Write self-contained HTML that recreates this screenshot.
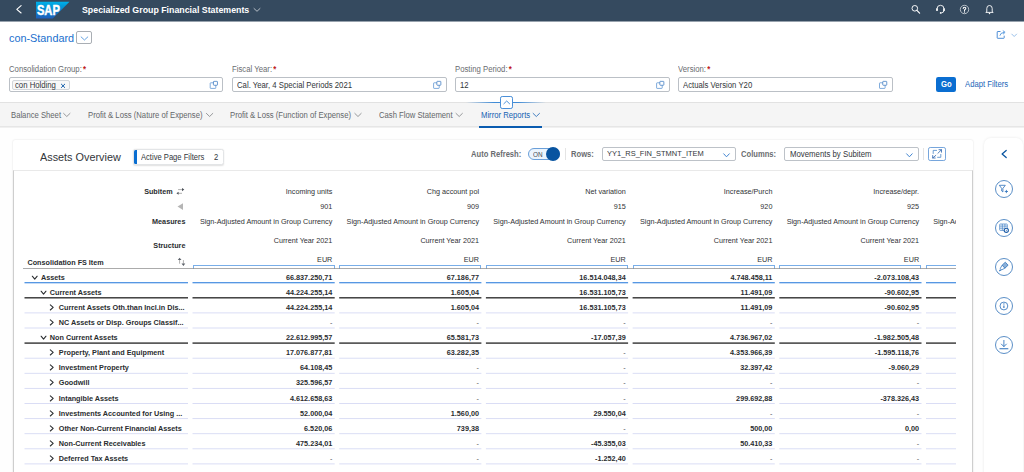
<!DOCTYPE html>
<html>
<head>
<meta charset="utf-8">
<title>Specialized Group Financial Statements</title>
<style>
*{box-sizing:border-box;margin:0;padding:0}
html,body{width:1024px;height:472px;overflow:hidden}
body{font-family:"Liberation Sans",sans-serif;background:#fefefe;color:#32363a;position:relative;font-size:7.7px}
.abs{position:absolute}
.t{position:absolute;white-space:nowrap;line-height:1}
svg{position:absolute;overflow:visible}
#shell{left:0;top:0;width:1024px;height:22px;background:#354a5f;border-bottom:1px solid #97a2ad}
#shelltitle{left:82px;top:5.8px;font-size:8.8px;font-weight:bold;color:#fff}
#hdr{left:0;top:22px;width:1024px;height:80px;background:#fff}
#variant{left:9.2px;top:32.6px;font-size:10.85px;color:#1a72d0;-webkit-text-stroke:0.2px}

.lbl b{color:#c01818;font-weight:bold;font-size:1em;line-height:0;position:relative;top:0.7px;left:1.3px}
.inp{position:absolute;top:77.3px;height:14.6px;width:214.5px;border:1px solid #bbc0c6;border-radius:2px;background:#fff}
.inp .v{position:absolute;left:4.2px;top:2.6px;font-size:7.75px;white-space:nowrap;line-height:1;color:#32363a;-webkit-text-stroke:0.18px}
#tabs{left:0;top:101.9px;width:1024px;height:24.8px;background:#f5f5f5;border-top:1px solid #e2e2e2;border-bottom:1px solid #e6e6e6;box-shadow:0 1px 0 #f0f0f0}
.tab{font-size:7.7px;color:#64676a;top:111.7px;-webkit-text-stroke:0.1px}
#card{left:13px;top:140px;width:960px;height:340px;background:#fff;border-radius:2px;box-shadow:0 0 2px rgba(0,0,0,.14)}
#tbl{left:13px;top:170px;width:960px;height:310px;border:1px solid #cecece;border-top-color:#e9e9e9;border-bottom:none;background:#fff}
#panel{left:984px;top:138px;width:38.6px;height:340px;background:#fff;border-radius:7px 7px 0 0;box-shadow:0 0 3px rgba(0,0,0,.09)}
.tb{font-size:7.6px;font-weight:bold;color:#64676a;top:150.7px}
.sel{position:absolute;top:146.9px;height:13.9px;border:1px solid #bdc2c8;border-radius:2px;background:#fff}
.sel .v{position:absolute;left:5px;top:2.9px;font-size:7.48px;white-space:nowrap;line-height:1;color:#32363a}
.h{font-size:7.22px;color:#2f3235;text-align:right}
.hb{font-size:7.22px;color:#2a2d30;font-weight:bold;text-align:right}
.c{position:absolute;white-space:nowrap;line-height:1;font-size:7.25px;font-weight:bold;color:#2a2d30;text-align:right}
.ln{position:absolute;height:1px}
#clip{left:0;top:171px;width:956px;height:301px;overflow:hidden}
.circ{position:absolute;left:994.7px;width:18.4px;height:18.4px;border:1px solid #5b8fc7;border-radius:50%;background:#fff}
</style>
</head>
<body>
<div id="shell" class="abs"></div>
<svg style="left:15px;top:4px" width="9" height="11"><g transform="translate(0.6,0.8)"><path d="M5.5 0.8 L1.2 4.5 L5.5 8.2" fill="none" stroke="#fff" stroke-width="1.1" stroke-linecap="round" stroke-linejoin="round"/></g></svg>
<svg style="left:36px;top:1px" width="35" height="19"><g transform="translate(0,0.8) scale(0.5,0.5)"><defs><linearGradient id="sg" x1="0" y1="0" x2="0" y2="1"><stop offset="0" stop-color="#00b1eb"/><stop offset="0.25" stop-color="#009ad9"/><stop offset="1" stop-color="#1e5fbb"/></linearGradient></defs><path d="M0 0 H67 L33.5 33.2 H0 Z" fill="url(#sg)"/><text x="1.8" y="27" font-family="Liberation Sans, sans-serif" font-weight="bold" font-size="28.5" fill="#fff" stroke="#fff" stroke-width="0.9" textLength="46" lengthAdjust="spacingAndGlyphs">SAP</text></g></svg>
<div class="t " style="left:82px;top:4.72px;font-size:9.56px;color:#fff;font-weight:bold;transform-origin:0 0;transform:scaleX(0.9217);">Specialized Group Financial Statements</div>
<svg style="left:253px;top:8px" width="9" height="5"><g transform="translate(0.5,0)"><path d="M0.5 0.5 L3.5 3.3 L6.5 0.5" fill="none" stroke="#d5dadf" stroke-width="0.8" stroke-linecap="round" stroke-linejoin="round"/></g></svg>
<svg style="left:911px;top:4px" width="11" height="12"><g transform="translate(0,0.5)"><circle cx="3.8" cy="3.8" r="2.8" fill="none" stroke="#fff" stroke-width="0.95"/><path d="M5.9 5.9 L8.6 8.6" stroke="#fff" stroke-width="1.2" stroke-linecap="round"/></g></svg>
<svg style="left:935px;top:4px" width="12" height="12"><g transform="translate(0,0)"><path d="M2 6 V4.8 A3.5 3.5 0 0 1 9 4.8 V6.2 A2.6 2.6 0 0 1 6.4 8.8" fill="none" stroke="#fff" stroke-width="0.9"/><rect x="1.2" y="4.3" width="1.6" height="2.8" rx="0.5" fill="#fff"/><rect x="8.2" y="4.3" width="1.6" height="2.8" rx="0.5" fill="#fff"/><circle cx="5.7" cy="8.9" r="0.9" fill="#fff"/></g></svg>
<svg style="left:959px;top:4px" width="12" height="12"><g transform="translate(0.5,0.5)"><circle cx="5" cy="5" r="4.2" fill="none" stroke="#e8ecef" stroke-width="0.7"/><path d="M3.7 4 Q3.7 2.7 5 2.7 Q6.3 2.7 6.3 3.8 Q6.3 4.6 5.5 5 Q5 5.3 5 6.1" fill="none" stroke="#fff" stroke-width="1.05" stroke-linecap="round"/><circle cx="5" cy="7.5" r="0.65" fill="#fff"/></g></svg>
<svg style="left:984px;top:4px" width="12" height="12"><g transform="translate(0.5,0)"><path d="M2.3 7.8 V4.4 A2.7 2.9 0 0 1 7.7 4.4 V7.8 L8.7 8.4 H1.3 Z" fill="none" stroke="#fff" stroke-width="0.9" stroke-linejoin="round"/><circle cx="5" cy="9.6" r="0.75" fill="#fff"/></g></svg>
<div id="hdr" class="abs"></div>
<div class="t " style="left:9.2px;top:31.61px;font-size:11.77px;color:#1a70ce;transform-origin:0 0;transform:scaleX(0.9217);">con-Standard</div>
<div class="abs" style="left:76.4px;top:31.4px;width:15.4px;height:12.2px;border:1px solid #a9aeb4;border-radius:2px;background:#fff"></div>
<svg style="left:80px;top:36px" width="10" height="6"><g transform="translate(0.5,0.3)"><path d="M0.6 0.6 L3.95 3.7 L7.3 0.6" fill="none" stroke="#3f8ad8" stroke-width="0.8" stroke-linecap="round" stroke-linejoin="round"/></g></svg>
<svg style="left:996px;top:30px" width="12" height="11"><g transform="translate(0.5,0.1)"><path d="M4 1.4 H1.2 Q0.7 1.4 0.7 1.9 V7.7 Q0.7 8.2 1.2 8.2 H7.2 Q7.7 8.2 7.7 7.7 V5.6" fill="none" stroke="#2f7bd0" stroke-width="0.85"/><path d="M3.4 5.6 Q3.8 2.6 7.6 2.3" fill="none" stroke="#3f8ad8" stroke-width="0.85"/><path d="M6.3 0.5 L8.6 2.2 L6.6 4.1" fill="none" stroke="#3f8ad8" stroke-width="0.85" stroke-linejoin="round"/></g></svg>
<svg style="left:1011px;top:33px" width="8" height="6"><g transform="translate(0.3,0.6)"><path d="M0.5 0.5 L2.9 2.9 L5.3 0.5" fill="none" stroke="#7fb0e3" stroke-width="0.8" stroke-linecap="round" stroke-linejoin="round"/></g></svg>
<div class="t lbl" style="left:8.9px;top:64.8px;font-size:8.41px;color:#6a6d70;transform-origin:0 0;transform:scaleX(0.9217);">Consolidation Group:<b>*</b></div>
<div class="inp" style="left:8.9px"><div class="abs" style="left:2.4px;top:1.8px;width:57.4px;height:10.2px;border:1px solid #d3d6da;border-radius:2px;background:#f8f8f8"></div></div>
<div class="t " style="left:14.8px;top:80.8px;font-size:8.41px;color:#32363a;transform-origin:0 0;transform:scaleX(0.9217);">con Holding</div>
<svg style="left:60px;top:83px" width="7" height="7"><g transform="translate(0.6,0.4)"><path d="M0.8 0.8 L4.1 4.1 M4.1 0.8 L0.8 4.1" stroke="#0f5aa8" stroke-width="1.0" stroke-linecap="round"/></g></svg>
<svg style="left:208px;top:80px" width="12" height="10"><g transform="translate(0.6,0.6)"><rect x="1.6" y="2.2" width="5.6" height="5.6" rx="0.5" fill="none" stroke="#5590d0" stroke-width="0.75"/><rect x="4.85" y="0.75" width="4" height="3.9" rx="0.5" fill="#fff" stroke="#3a78c0" stroke-width="0.75"/></g></svg>
<div class="t lbl" style="left:232.3px;top:64.8px;font-size:8.41px;color:#6a6d70;transform-origin:0 0;transform:scaleX(0.9217);">Fiscal Year:<b>*</b></div>
<div class="inp" style="left:232.3px"></div>
<div class="t " style="left:237.3px;top:80.8px;font-size:8.41px;color:#32363a;transform-origin:0 0;transform:scaleX(0.9217);">Cal. Year, 4 Special Periods 2021</div>
<svg style="left:432px;top:80px" width="11" height="10"><g transform="translate(0,0.6)"><rect x="1.6" y="2.2" width="5.6" height="5.6" rx="0.5" fill="none" stroke="#5590d0" stroke-width="0.75"/><rect x="4.85" y="0.75" width="4" height="3.9" rx="0.5" fill="#fff" stroke="#3a78c0" stroke-width="0.75"/></g></svg>
<div class="t lbl" style="left:455.3px;top:64.8px;font-size:8.41px;color:#6a6d70;transform-origin:0 0;transform:scaleX(0.9217);">Posting Period:<b>*</b></div>
<div class="inp" style="left:455.3px"></div>
<div class="t " style="left:460.3px;top:80.8px;font-size:8.41px;color:#32363a;transform-origin:0 0;transform:scaleX(0.9217);">12</div>
<svg style="left:655px;top:80px" width="11" height="10"><g transform="translate(0,0.6)"><rect x="1.6" y="2.2" width="5.6" height="5.6" rx="0.5" fill="none" stroke="#5590d0" stroke-width="0.75"/><rect x="4.85" y="0.75" width="4" height="3.9" rx="0.5" fill="#fff" stroke="#3a78c0" stroke-width="0.75"/></g></svg>
<div class="t lbl" style="left:678.2px;top:64.8px;font-size:8.41px;color:#6a6d70;transform-origin:0 0;transform:scaleX(0.9217);">Version:<b>*</b></div>
<div class="inp" style="left:678.2px"></div>
<div class="t " style="left:683.2px;top:80.8px;font-size:8.41px;color:#32363a;transform-origin:0 0;transform:scaleX(0.9217);">Actuals Version Y20</div>
<svg style="left:877px;top:80px" width="12" height="10"><g transform="translate(0.9,0.6)"><rect x="1.6" y="2.2" width="5.6" height="5.6" rx="0.5" fill="none" stroke="#5590d0" stroke-width="0.75"/><rect x="4.85" y="0.75" width="4" height="3.9" rx="0.5" fill="#fff" stroke="#3a78c0" stroke-width="0.75"/></g></svg>
<div class="abs" style="left:936.3px;top:77.4px;width:19.8px;height:14.6px;background:#0a6ed1;border-radius:2.2px"></div>
<div class="t " style="left:940.9px;top:79.82px;font-size:8.35px;color:#fff;font-weight:bold;transform-origin:0 0;transform:scaleX(0.9217);">Go</div>
<div class="t " style="left:965.2px;top:79.82px;font-size:8.35px;color:#1c66b8;transform-origin:0 0;transform:scaleX(0.9217);">Adapt Filters</div>
<div id="tabs" class="abs"></div>
<div class="abs" style="left:466px;top:101.6px;width:80px;height:1px;background:linear-gradient(90deg,rgba(10,110,209,0),rgba(10,110,209,.75) 35%,rgba(10,110,209,.75) 65%,rgba(10,110,209,0))"></div>
<div class="abs" style="left:500.3px;top:96px;width:12.9px;height:12.8px;border:1px solid #4a8fd8;border-radius:2.2px;background:#fff"></div>
<svg style="left:503px;top:100px" width="9" height="6"><g transform="translate(0.2,0.4)"><path d="M0.6 3.4 L3.5 0.6 L6.4 3.4" fill="none" stroke="#2f7fd3" stroke-width="0.85" stroke-linecap="round" stroke-linejoin="round"/></g></svg>
<div class="t " style="left:10.7px;top:110.82px;font-size:8.35px;color:#64676a;transform-origin:0 0;transform:scaleX(0.9217);">Balance Sheet</div>
<svg style="left:63px;top:112px" width="9" height="7"><g transform="translate(0.1,0.9)"><path d="M0.5 0.5 L3.7 3.6 L6.9 0.5" fill="none" stroke="#7d8083" stroke-width="0.8" stroke-linecap="round" stroke-linejoin="round"/></g></svg>
<div class="t " style="left:88.3px;top:110.82px;font-size:8.35px;color:#64676a;transform-origin:0 0;transform:scaleX(0.9217);">Profit &amp; Loss (Nature of Expense)</div>
<svg style="left:205px;top:112px" width="10" height="7"><g transform="translate(0.9,0.9)"><path d="M0.5 0.5 L3.7 3.6 L6.9 0.5" fill="none" stroke="#7d8083" stroke-width="0.8" stroke-linecap="round" stroke-linejoin="round"/></g></svg>
<div class="t " style="left:230px;top:110.82px;font-size:8.35px;color:#64676a;transform-origin:0 0;transform:scaleX(0.9217);">Profit &amp; Loss (Function of Expense)</div>
<svg style="left:354px;top:112px" width="9" height="7"><g transform="translate(0.3,0.9)"><path d="M0.5 0.5 L3.7 3.6 L6.9 0.5" fill="none" stroke="#7d8083" stroke-width="0.8" stroke-linecap="round" stroke-linejoin="round"/></g></svg>
<div class="t " style="left:379px;top:110.82px;font-size:8.35px;color:#64676a;transform-origin:0 0;transform:scaleX(0.9217);">Cash Flow Statement</div>
<svg style="left:455px;top:112px" width="9" height="7"><g transform="translate(0.5,0.9)"><path d="M0.5 0.5 L3.7 3.6 L6.9 0.5" fill="none" stroke="#7d8083" stroke-width="0.8" stroke-linecap="round" stroke-linejoin="round"/></g></svg>
<div class="t " style="left:480.6px;top:110.82px;font-size:8.35px;color:#1562b3;transform-origin:0 0;transform:scaleX(0.9217);">Mirror Reports</div>
<svg style="left:532px;top:112px" width="10" height="7"><g transform="translate(0.6,0.9)"><path d="M0.5 0.5 L3.7 3.6 L6.9 0.5" fill="none" stroke="#1562b3" stroke-width="0.8" stroke-linecap="round" stroke-linejoin="round"/></g></svg>
<div class="abs" style="left:478.6px;top:125.5px;width:63px;height:2px;background:#0a5cb0"></div>
<div id="card" class="abs"></div>
<div id="tbl" class="abs"></div>
<div class="t " style="left:40.1px;top:150.61px;font-size:11.77px;color:#32363a;transform-origin:0 0;transform:scaleX(0.9217);">Assets Overview</div>
<div class="abs" style="left:133.2px;top:148.8px;width:91px;height:15.8px;border:1px solid #e3e5e7;border-radius:2.5px;background:#fff;box-shadow:0 0.5px 1.5px rgba(0,0,0,.12);overflow:hidden"><div class="abs" style="left:-1px;top:-1px;width:3.6px;height:17px;background:#0a6ed1"></div></div>
<div class="t " style="left:140.9px;top:154.38px;font-size:8.25px;color:#32363a;transform-origin:0 0;transform:scaleX(0.9217);">Active Page Filters</div>
<div class="t " style="left:214.2px;top:154.38px;font-size:8.25px;color:#32363a;transform-origin:0 0;transform:scaleX(0.9217);">2</div>
<div class="t " style="left:471.4px;top:151.38px;font-size:8.25px;color:#6a6d70;font-weight:bold;transform-origin:0 0;transform:scaleX(0.9217);">Auto Refresh:</div>
<div class="abs" style="left:528px;top:148.3px;width:31.5px;height:12.2px;border:1px solid #6a9fd9;border-radius:6.2px;background:#ebf4fd"></div>
<div class="t " style="left:532.9px;top:152.03px;font-size:6.94px;color:#4a4f55;transform-origin:0 0;transform:scaleX(0.9217);">ON</div>
<div class="abs" style="left:545.7px;top:146.9px;width:14.3px;height:14.3px;border-radius:50%;background:#0854a0"></div>
<div class="abs" style="left:565px;top:148px;width:1px;height:12px;background:#e4e4e4"></div>
<div class="t " style="left:570.6px;top:151.38px;font-size:8.25px;color:#6a6d70;font-weight:bold;transform-origin:0 0;transform:scaleX(0.9217);">Rows:</div>
<div class="sel" style="left:601.6px;width:134.1px"></div>
<div class="t " style="left:607.4px;top:150.44px;font-size:8.12px;color:#32363a;transform-origin:0 0;transform:scaleX(0.9217);">YY1_RS_FIN_STMNT_ITEM</div>
<svg style="left:723px;top:153px" width="9" height="6"><g transform="translate(0.2,0.3)"><path d="M0.5 0.5 L3.3 3.5 L6.1 0.5" fill="none" stroke="#3a7fcf" stroke-width="0.95" stroke-linecap="round" stroke-linejoin="round"/></g></svg>
<div class="t " style="left:740.6px;top:151.38px;font-size:8.25px;color:#6a6d70;font-weight:bold;transform-origin:0 0;transform:scaleX(0.9217);">Columns:</div>
<div class="sel" style="left:784.2px;width:134.6px"></div>
<div class="t " style="left:789.7px;top:149.76px;font-size:8.48px;color:#32363a;transform-origin:0 0;transform:scaleX(0.9217);">Movements by Subitem</div>
<svg style="left:906px;top:153px" width="9" height="6"><g transform="translate(0.1,0.3)"><path d="M0.5 0.5 L3.3 3.5 L6.1 0.5" fill="none" stroke="#3a7fcf" stroke-width="0.95" stroke-linecap="round" stroke-linejoin="round"/></g></svg>
<div class="abs" style="left:923px;top:148px;width:1px;height:12px;background:#e4e4e4"></div>
<div class="abs" style="left:928.2px;top:146.5px;width:17.8px;height:14.6px;border:1px solid #77a6dc;border-radius:2.2px;background:#fff"></div>
<svg style="left:932px;top:149px" width="12" height="11"><g transform="translate(0.3,0)"><g fill="none" stroke-width="0.8" stroke-linecap="round" stroke-linejoin="round"><path d="M0.9 4.5 V1.4 H4.3" stroke="#4a86c8"/><path d="M8.5 5.4 V8.3 H5.3" stroke="#4a86c8"/><path d="M5.6 4.3 L9.1 0.8 M6.7 0.7 H9.2 V3.2" stroke="#2b62ad"/><path d="M3.5 6.4 L0.5 8.9 M0.4 6.5 V9 H2.9" stroke="#2b62ad"/></g></g></svg>
<div id="panel" class="abs"></div>
<svg style="left:1000px;top:149px" width="9" height="11"><g transform="translate(0.8,0.8)"><path d="M5.4 0.7 L1.3 4.2 L5.4 7.7" fill="none" stroke="#0854a0" stroke-width="1.25" stroke-linecap="round" stroke-linejoin="round"/></g></svg>
<div class="circ" style="top:179.6px"></div>
<svg style="left:994px;top:179px" width="21" height="20"><g transform="translate(0.7,0.6)"><path d="M4.6 5.7 H10.6 L8.2 8.8 V12.3 L7 11.4 V8.8 Z" fill="none" stroke="#2a6fba" stroke-width="0.8" stroke-linejoin="round"/><path d="M11.7 10.3 V13.5 M10.1 11.9 H13.3" stroke="#2a6fba" stroke-width="0.8"/></g></svg>
<div class="circ" style="top:218.8px"></div>
<svg style="left:994px;top:218px" width="21" height="21"><g transform="translate(0.7,0.8)"><g fill="none" stroke="#4a86c8" stroke-width="0.75"><rect x="5" y="5.2" width="7.6" height="6.4" rx="0.6"/><path d="M5 7.3 H12.6 M5 9.4 H10 M7.6 5.2 V11.6 M10.2 5.2 V9"/></g><circle cx="11.6" cy="11.5" r="2.1" fill="#fff" stroke="#1f5ea8" stroke-width="1.1"/><circle cx="11.6" cy="11.5" r="0.5" fill="#1f5ea8"/></g></svg>
<div class="circ" style="top:257.8px"></div>
<svg style="left:994px;top:257px" width="21" height="21"><g transform="translate(0.7,0.8)"><g stroke="#2a6fba" stroke-width="0.75" stroke-linejoin="round"><path d="M10.6 4.4 L13.4 7.4 L10.2 10.4 L7.4 7.4 Z" fill="#2a6fba" fill-opacity="0.55"/><path d="M7.4 7.4 L5.6 10.6 L7 12 L10.2 10.4" fill="none"/><path d="M5.8 11.4 L4.6 13.2 L6.6 12.4" fill="none"/></g></g></svg>
<div class="circ" style="top:296.8px"></div>
<svg style="left:994px;top:296px" width="21" height="21"><g transform="translate(0.7,0.8)"><circle cx="9.2" cy="9.2" r="3.9" fill="none" stroke="#2a6fba" stroke-width="0.8"/><path d="M9.2 8.6 V11.3" stroke="#2a6fba" stroke-width="1.1"/><circle cx="9.2" cy="7.1" r="0.65" fill="#2a6fba"/></g></svg>
<div class="circ" style="top:335.8px"></div>
<svg style="left:994px;top:335px" width="21" height="21"><g transform="translate(0.7,0.8)"><g fill="none" stroke="#2a6fba" stroke-width="0.85" stroke-linecap="round" stroke-linejoin="round"><path d="M9.2 4.6 V10.6 M6.7 8.3 L9.2 10.8 L11.7 8.3"/><path d="M5.2 13 H13.2" stroke-width="1.1"/></g></g></svg>
<div id="clip" class="abs">
<div class="t h" style="right:623.7px;top:17px;">Incoming units</div>
<div class="t h" style="right:623.7px;top:32px;">901</div>
<div class="t h" style="right:623.7px;top:47px;">Sign-Adjusted Amount in Group Currency</div>
<div class="t h" style="right:623.7px;top:66px;">Current Year 2021</div>
<div class="t h" style="right:623.7px;top:84.7px;">EUR</div>
<div class="abs" style="left:192.5px;top:94px;width:142.2px;height:4px;border:1px solid #79aee8;border-bottom:none"></div>
<div class="t h" style="right:477px;top:17px;">Chg account pol</div>
<div class="t h" style="right:477px;top:32px;">909</div>
<div class="t h" style="right:477px;top:47px;">Sign-Adjusted Amount in Group Currency</div>
<div class="t h" style="right:477px;top:66px;">Current Year 2021</div>
<div class="t h" style="right:477px;top:84.7px;">EUR</div>
<div class="abs" style="left:339.2px;top:94px;width:142.2px;height:4px;border:1px solid #79aee8;border-bottom:none"></div>
<div class="t h" style="right:330.3px;top:17px;">Net variation</div>
<div class="t h" style="right:330.3px;top:32px;">915</div>
<div class="t h" style="right:330.3px;top:47px;">Sign-Adjusted Amount in Group Currency</div>
<div class="t h" style="right:330.3px;top:66px;">Current Year 2021</div>
<div class="t h" style="right:330.3px;top:84.7px;">EUR</div>
<div class="abs" style="left:485.9px;top:94px;width:142.2px;height:4px;border:1px solid #79aee8;border-bottom:none"></div>
<div class="t h" style="right:183.6px;top:17px;">Increase/Purch</div>
<div class="t h" style="right:183.6px;top:32px;">920</div>
<div class="t h" style="right:183.6px;top:47px;">Sign-Adjusted Amount in Group Currency</div>
<div class="t h" style="right:183.6px;top:66px;">Current Year 2021</div>
<div class="t h" style="right:183.6px;top:84.7px;">EUR</div>
<div class="abs" style="left:632.6px;top:94px;width:142.2px;height:4px;border:1px solid #79aee8;border-bottom:none"></div>
<div class="t h" style="right:36.9px;top:17px;">Increase/depr.</div>
<div class="t h" style="right:36.9px;top:32px;">925</div>
<div class="t h" style="right:36.9px;top:47px;">Sign-Adjusted Amount in Group Currency</div>
<div class="t h" style="right:36.9px;top:66px;">Current Year 2021</div>
<div class="t h" style="right:36.9px;top:84.7px;">EUR</div>
<div class="abs" style="left:779.3px;top:94px;width:142.2px;height:4px;border:1px solid #79aee8;border-bottom:none"></div>
<div class="t h" style="left:933.2px;top:47px;">Sign-Adjusted Amount in Group Currency</div>
<div class="abs" style="left:926px;top:94px;width:142.2px;height:4px;border:1px solid #79aee8;border-bottom:none"></div>
<div class="t hb" style="right:783.4px;top:17px;">Subitem</div>
<svg style="left:176px;top:16px" width="10" height="10"><g transform="translate(0,0.5)"><path d="M2.1 2.1 H6.4 M2.3 5.8 H6" fill="none" stroke="#9b9b9b" stroke-width="0.8"/><path d="M6 0.6 L8.3 2.1 L6 3.7 Z M2.6 4.3 L0.4 5.8 L2.6 7.3 Z" fill="#4d525a"/></g></svg>
<svg style="left:177px;top:32px" width="8" height="9"><g transform="translate(0.2,0.1)"><path d="M5.8 0.2 V6.8 L0.3 3.5 Z" fill="#b5b5b5"/></g></svg>
<div class="t hb" style="right:770.6px;top:47px;">Measures</div>
<div class="t hb" style="right:770.6px;top:71px;">Structure</div>
<div class="t hb" style="left:27.5px;top:87.6px;">Consolidation FS Item</div>
<svg style="left:177px;top:86px" width="10" height="11"><g transform="translate(0.4,0.3)"><path d="M2.2 2.4 V6.4 M6 2.8 V6.4" fill="none" stroke="#9b9b9b" stroke-width="0.8"/><path d="M0.4 2.7 L2.2 0.4 L4.1 2.7 Z M4.1 6.2 L6 8.6 L7.9 6.2 Z" fill="#5d626a"/></g></svg>
<svg style="left:31px;top:104px" width="8" height="6"><g transform="translate(0.8,0.6)"><path d="M0.5 0.6 L2.95 3.6 L5.4 0.6" fill="none" stroke="#2a2d30" stroke-width="1.05" stroke-linecap="round" stroke-linejoin="round"/></g></svg>
<div class="t c" style="left:41px;top:103px;">Assets</div>
<div class="t c" style="right:623.7px;top:103px;">66.837.250,71</div>
<div class="t c" style="right:477px;top:103px;">67.186,77</div>
<div class="t c" style="right:330.3px;top:103px;">16.514.048,34</div>
<div class="t c" style="right:183.6px;top:103px;">4.748.458,11</div>
<div class="t c" style="right:36.9px;top:103px;">-2.073.108,43</div>
<svg style="left:40px;top:119px" width="8" height="6"><g transform="translate(0.6,0.6)"><path d="M0.5 0.6 L2.95 3.6 L5.4 0.6" fill="none" stroke="#2a2d30" stroke-width="1.05" stroke-linecap="round" stroke-linejoin="round"/></g></svg>
<div class="t c" style="left:49.8px;top:118px;">Current Assets</div>
<div class="t c" style="right:623.7px;top:118px;">44.224.255,14</div>
<div class="t c" style="right:477px;top:118px;">1.605,04</div>
<div class="t c" style="right:330.3px;top:118px;">16.531.105,73</div>
<div class="t c" style="right:183.6px;top:118px;">11.491,09</div>
<div class="t c" style="right:36.9px;top:118px;">-90.602,95</div>
<svg style="left:49px;top:133px" width="7" height="8"><g transform="translate(0.7,0.3)"><path d="M0.6 0.5 L3.5 3.1 L0.6 5.7" fill="none" stroke="#2a2d30" stroke-width="1.05" stroke-linecap="round" stroke-linejoin="round"/></g></svg>
<div class="t c" style="left:58.8px;top:133px;">Current Assets Oth.than Incl.in Dis...</div>
<div class="t c" style="right:623.7px;top:133px;">44.224.255,14</div>
<div class="t c" style="right:477px;top:133px;">1.605,04</div>
<div class="t c" style="right:330.3px;top:133px;">16.531.105,73</div>
<div class="t c" style="right:183.6px;top:133px;">11.491,09</div>
<div class="t c" style="right:36.9px;top:133px;">-90.602,95</div>
<svg style="left:49px;top:148px" width="7" height="8"><g transform="translate(0.7,0.3)"><path d="M0.6 0.5 L3.5 3.1 L0.6 5.7" fill="none" stroke="#2a2d30" stroke-width="1.05" stroke-linecap="round" stroke-linejoin="round"/></g></svg>
<div class="t c" style="left:58.8px;top:148px;">NC Assets or Disp. Groups Classif...</div>
<div class="t c" style="right:623.7px;top:148px;color:#505356;font-weight:normal;">-</div>
<div class="t c" style="right:477px;top:148px;color:#505356;font-weight:normal;">-</div>
<div class="t c" style="right:330.3px;top:148px;color:#505356;font-weight:normal;">-</div>
<div class="t c" style="right:183.6px;top:148px;color:#505356;font-weight:normal;">-</div>
<div class="t c" style="right:36.9px;top:148px;color:#505356;font-weight:normal;">-</div>
<svg style="left:40px;top:164px" width="8" height="6"><g transform="translate(0.6,0.6)"><path d="M0.5 0.6 L2.95 3.6 L5.4 0.6" fill="none" stroke="#2a2d30" stroke-width="1.05" stroke-linecap="round" stroke-linejoin="round"/></g></svg>
<div class="t c" style="left:49.8px;top:163px;">Non Current Assets</div>
<div class="t c" style="right:623.7px;top:163px;">22.612.995,57</div>
<div class="t c" style="right:477px;top:163px;">65.581,73</div>
<div class="t c" style="right:330.3px;top:163px;">-17.057,39</div>
<div class="t c" style="right:183.6px;top:163px;">4.736.967,02</div>
<div class="t c" style="right:36.9px;top:163px;">-1.982.505,48</div>
<svg style="left:49px;top:178px" width="7" height="8"><g transform="translate(0.7,0.3)"><path d="M0.6 0.5 L3.5 3.1 L0.6 5.7" fill="none" stroke="#2a2d30" stroke-width="1.05" stroke-linecap="round" stroke-linejoin="round"/></g></svg>
<div class="t c" style="left:58.8px;top:178px;">Property, Plant and Equipment</div>
<div class="t c" style="right:623.7px;top:178px;">17.076.877,81</div>
<div class="t c" style="right:477px;top:178px;">63.282,35</div>
<div class="t c" style="right:330.3px;top:178px;color:#505356;font-weight:normal;">-</div>
<div class="t c" style="right:183.6px;top:178px;">4.353.966,39</div>
<div class="t c" style="right:36.9px;top:178px;">-1.595.118,76</div>
<svg style="left:49px;top:193px" width="7" height="8"><g transform="translate(0.7,0.3)"><path d="M0.6 0.5 L3.5 3.1 L0.6 5.7" fill="none" stroke="#2a2d30" stroke-width="1.05" stroke-linecap="round" stroke-linejoin="round"/></g></svg>
<div class="t c" style="left:58.8px;top:193px;">Investment Property</div>
<div class="t c" style="right:623.7px;top:193px;">64.108,45</div>
<div class="t c" style="right:477px;top:193px;color:#505356;font-weight:normal;">-</div>
<div class="t c" style="right:330.3px;top:193px;color:#505356;font-weight:normal;">-</div>
<div class="t c" style="right:183.6px;top:193px;">32.397,42</div>
<div class="t c" style="right:36.9px;top:193px;">-9.060,29</div>
<svg style="left:49px;top:208px" width="7" height="8"><g transform="translate(0.7,0.3)"><path d="M0.6 0.5 L3.5 3.1 L0.6 5.7" fill="none" stroke="#2a2d30" stroke-width="1.05" stroke-linecap="round" stroke-linejoin="round"/></g></svg>
<div class="t c" style="left:58.8px;top:208px;">Goodwill</div>
<div class="t c" style="right:623.7px;top:208px;">325.596,57</div>
<div class="t c" style="right:477px;top:208px;color:#505356;font-weight:normal;">-</div>
<div class="t c" style="right:330.3px;top:208px;color:#505356;font-weight:normal;">-</div>
<div class="t c" style="right:183.6px;top:208px;color:#505356;font-weight:normal;">-</div>
<div class="t c" style="right:36.9px;top:208px;color:#505356;font-weight:normal;">-</div>
<svg style="left:49px;top:224px" width="7" height="8"><g transform="translate(0.7,0.3)"><path d="M0.6 0.5 L3.5 3.1 L0.6 5.7" fill="none" stroke="#2a2d30" stroke-width="1.05" stroke-linecap="round" stroke-linejoin="round"/></g></svg>
<div class="t c" style="left:58.8px;top:224px;">Intangible Assets</div>
<div class="t c" style="right:623.7px;top:224px;">4.612.658,63</div>
<div class="t c" style="right:477px;top:224px;color:#505356;font-weight:normal;">-</div>
<div class="t c" style="right:330.3px;top:224px;color:#505356;font-weight:normal;">-</div>
<div class="t c" style="right:183.6px;top:224px;">299.692,88</div>
<div class="t c" style="right:36.9px;top:224px;">-378.326,43</div>
<svg style="left:49px;top:239px" width="7" height="8"><g transform="translate(0.7,0.3)"><path d="M0.6 0.5 L3.5 3.1 L0.6 5.7" fill="none" stroke="#2a2d30" stroke-width="1.05" stroke-linecap="round" stroke-linejoin="round"/></g></svg>
<div class="t c" style="left:58.8px;top:239px;">Investments Accounted for Using ...</div>
<div class="t c" style="right:623.7px;top:239px;">52.000,04</div>
<div class="t c" style="right:477px;top:239px;">1.560,00</div>
<div class="t c" style="right:330.3px;top:239px;">29.550,04</div>
<div class="t c" style="right:183.6px;top:239px;color:#505356;font-weight:normal;">-</div>
<div class="t c" style="right:36.9px;top:239px;color:#505356;font-weight:normal;">-</div>
<svg style="left:49px;top:254px" width="7" height="8"><g transform="translate(0.7,0.3)"><path d="M0.6 0.5 L3.5 3.1 L0.6 5.7" fill="none" stroke="#2a2d30" stroke-width="1.05" stroke-linecap="round" stroke-linejoin="round"/></g></svg>
<div class="t c" style="left:58.8px;top:254px;">Other Non-Current Financial Assets</div>
<div class="t c" style="right:623.7px;top:254px;">6.520,06</div>
<div class="t c" style="right:477px;top:254px;">739,38</div>
<div class="t c" style="right:330.3px;top:254px;color:#505356;font-weight:normal;">-</div>
<div class="t c" style="right:183.6px;top:254px;">500,00</div>
<div class="t c" style="right:36.9px;top:254px;">0,00</div>
<svg style="left:49px;top:269px" width="7" height="8"><g transform="translate(0.7,0.3)"><path d="M0.6 0.5 L3.5 3.1 L0.6 5.7" fill="none" stroke="#2a2d30" stroke-width="1.05" stroke-linecap="round" stroke-linejoin="round"/></g></svg>
<div class="t c" style="left:58.8px;top:269px;">Non-Current Receivables</div>
<div class="t c" style="right:623.7px;top:269px;">475.234,01</div>
<div class="t c" style="right:477px;top:269px;color:#505356;font-weight:normal;">-</div>
<div class="t c" style="right:330.3px;top:269px;">-45.355,03</div>
<div class="t c" style="right:183.6px;top:269px;">50.410,33</div>
<div class="t c" style="right:36.9px;top:269px;color:#505356;font-weight:normal;">-</div>
<svg style="left:49px;top:284px" width="7" height="8"><g transform="translate(0.7,0.3)"><path d="M0.6 0.5 L3.5 3.1 L0.6 5.7" fill="none" stroke="#2a2d30" stroke-width="1.05" stroke-linecap="round" stroke-linejoin="round"/></g></svg>
<div class="t c" style="left:58.8px;top:284px;">Deferred Tax Assets</div>
<div class="t c" style="right:623.7px;top:284px;color:#505356;font-weight:normal;">-</div>
<div class="t c" style="right:477px;top:284px;color:#505356;font-weight:normal;">-</div>
<div class="t c" style="right:330.3px;top:284px;">-1.252,40</div>
<div class="t c" style="right:183.6px;top:284px;color:#505356;font-weight:normal;">-</div>
<div class="t c" style="right:36.9px;top:284px;color:#505356;font-weight:normal;">-</div>
<svg style="left:0;top:0" width="956" height="301" viewBox="0 0 956 301"><rect x="23" y="97" width="940" height="0.75" fill="#8f8f8f"/><rect x="24.5" y="111.07" width="163.5" height="1.25" fill="#4a90e2"/><rect x="192.5" y="111.07" width="142.2" height="1.25" fill="#4a90e2"/><rect x="339.2" y="111.07" width="142.2" height="1.25" fill="#4a90e2"/><rect x="485.9" y="111.07" width="142.2" height="1.25" fill="#4a90e2"/><rect x="632.6" y="111.07" width="142.2" height="1.25" fill="#4a90e2"/><rect x="779.3" y="111.07" width="142.2" height="1.25" fill="#4a90e2"/><rect x="926" y="111.07" width="142.2" height="1.25" fill="#4a90e2"/><rect x="24.5" y="126.1" width="163.5" height="1.4" fill="#333333"/><rect x="192.5" y="126.1" width="142.2" height="1.4" fill="#333333"/><rect x="339.2" y="126.1" width="142.2" height="1.4" fill="#333333"/><rect x="485.9" y="126.1" width="142.2" height="1.4" fill="#333333"/><rect x="632.6" y="126.1" width="142.2" height="1.4" fill="#333333"/><rect x="779.3" y="126.1" width="142.2" height="1.4" fill="#333333"/><rect x="926" y="126.1" width="142.2" height="1.4" fill="#333333"/><rect x="24.5" y="141.45" width="163.5" height="0.9" fill="#d6daf4"/><rect x="192.5" y="141.45" width="142.2" height="0.9" fill="#d6daf4"/><rect x="339.2" y="141.45" width="142.2" height="0.9" fill="#d6daf4"/><rect x="485.9" y="141.45" width="142.2" height="0.9" fill="#d6daf4"/><rect x="632.6" y="141.45" width="142.2" height="0.9" fill="#d6daf4"/><rect x="779.3" y="141.45" width="142.2" height="0.9" fill="#d6daf4"/><rect x="926" y="141.45" width="142.2" height="0.9" fill="#d6daf4"/><rect x="24.5" y="156.55" width="163.5" height="0.9" fill="#d6daf4"/><rect x="192.5" y="156.55" width="142.2" height="0.9" fill="#d6daf4"/><rect x="339.2" y="156.55" width="142.2" height="0.9" fill="#d6daf4"/><rect x="485.9" y="156.55" width="142.2" height="0.9" fill="#d6daf4"/><rect x="632.6" y="156.55" width="142.2" height="0.9" fill="#d6daf4"/><rect x="779.3" y="156.55" width="142.2" height="0.9" fill="#d6daf4"/><rect x="926" y="156.55" width="142.2" height="0.9" fill="#d6daf4"/><rect x="24.5" y="171.4" width="163.5" height="1.4" fill="#333333"/><rect x="192.5" y="171.4" width="142.2" height="1.4" fill="#333333"/><rect x="339.2" y="171.4" width="142.2" height="1.4" fill="#333333"/><rect x="485.9" y="171.4" width="142.2" height="1.4" fill="#333333"/><rect x="632.6" y="171.4" width="142.2" height="1.4" fill="#333333"/><rect x="779.3" y="171.4" width="142.2" height="1.4" fill="#333333"/><rect x="926" y="171.4" width="142.2" height="1.4" fill="#333333"/><rect x="24.5" y="186.75" width="163.5" height="0.9" fill="#d6daf4"/><rect x="192.5" y="186.75" width="142.2" height="0.9" fill="#d6daf4"/><rect x="339.2" y="186.75" width="142.2" height="0.9" fill="#d6daf4"/><rect x="485.9" y="186.75" width="142.2" height="0.9" fill="#d6daf4"/><rect x="632.6" y="186.75" width="142.2" height="0.9" fill="#d6daf4"/><rect x="779.3" y="186.75" width="142.2" height="0.9" fill="#d6daf4"/><rect x="926" y="186.75" width="142.2" height="0.9" fill="#d6daf4"/><rect x="24.5" y="201.85" width="163.5" height="0.9" fill="#d6daf4"/><rect x="192.5" y="201.85" width="142.2" height="0.9" fill="#d6daf4"/><rect x="339.2" y="201.85" width="142.2" height="0.9" fill="#d6daf4"/><rect x="485.9" y="201.85" width="142.2" height="0.9" fill="#d6daf4"/><rect x="632.6" y="201.85" width="142.2" height="0.9" fill="#d6daf4"/><rect x="779.3" y="201.85" width="142.2" height="0.9" fill="#d6daf4"/><rect x="926" y="201.85" width="142.2" height="0.9" fill="#d6daf4"/><rect x="24.5" y="216.95" width="163.5" height="0.9" fill="#d6daf4"/><rect x="192.5" y="216.95" width="142.2" height="0.9" fill="#d6daf4"/><rect x="339.2" y="216.95" width="142.2" height="0.9" fill="#d6daf4"/><rect x="485.9" y="216.95" width="142.2" height="0.9" fill="#d6daf4"/><rect x="632.6" y="216.95" width="142.2" height="0.9" fill="#d6daf4"/><rect x="779.3" y="216.95" width="142.2" height="0.9" fill="#d6daf4"/><rect x="926" y="216.95" width="142.2" height="0.9" fill="#d6daf4"/><rect x="24.5" y="232.05" width="163.5" height="0.9" fill="#d6daf4"/><rect x="192.5" y="232.05" width="142.2" height="0.9" fill="#d6daf4"/><rect x="339.2" y="232.05" width="142.2" height="0.9" fill="#d6daf4"/><rect x="485.9" y="232.05" width="142.2" height="0.9" fill="#d6daf4"/><rect x="632.6" y="232.05" width="142.2" height="0.9" fill="#d6daf4"/><rect x="779.3" y="232.05" width="142.2" height="0.9" fill="#d6daf4"/><rect x="926" y="232.05" width="142.2" height="0.9" fill="#d6daf4"/><rect x="24.5" y="247.15" width="163.5" height="0.9" fill="#d6daf4"/><rect x="192.5" y="247.15" width="142.2" height="0.9" fill="#d6daf4"/><rect x="339.2" y="247.15" width="142.2" height="0.9" fill="#d6daf4"/><rect x="485.9" y="247.15" width="142.2" height="0.9" fill="#d6daf4"/><rect x="632.6" y="247.15" width="142.2" height="0.9" fill="#d6daf4"/><rect x="779.3" y="247.15" width="142.2" height="0.9" fill="#d6daf4"/><rect x="926" y="247.15" width="142.2" height="0.9" fill="#d6daf4"/><rect x="24.5" y="262.25" width="163.5" height="0.9" fill="#d6daf4"/><rect x="192.5" y="262.25" width="142.2" height="0.9" fill="#d6daf4"/><rect x="339.2" y="262.25" width="142.2" height="0.9" fill="#d6daf4"/><rect x="485.9" y="262.25" width="142.2" height="0.9" fill="#d6daf4"/><rect x="632.6" y="262.25" width="142.2" height="0.9" fill="#d6daf4"/><rect x="779.3" y="262.25" width="142.2" height="0.9" fill="#d6daf4"/><rect x="926" y="262.25" width="142.2" height="0.9" fill="#d6daf4"/><rect x="24.5" y="277.35" width="163.5" height="0.9" fill="#d6daf4"/><rect x="192.5" y="277.35" width="142.2" height="0.9" fill="#d6daf4"/><rect x="339.2" y="277.35" width="142.2" height="0.9" fill="#d6daf4"/><rect x="485.9" y="277.35" width="142.2" height="0.9" fill="#d6daf4"/><rect x="632.6" y="277.35" width="142.2" height="0.9" fill="#d6daf4"/><rect x="779.3" y="277.35" width="142.2" height="0.9" fill="#d6daf4"/><rect x="926" y="277.35" width="142.2" height="0.9" fill="#d6daf4"/><rect x="24.5" y="292.45" width="163.5" height="0.9" fill="#d6daf4"/><rect x="192.5" y="292.45" width="142.2" height="0.9" fill="#d6daf4"/><rect x="339.2" y="292.45" width="142.2" height="0.9" fill="#d6daf4"/><rect x="485.9" y="292.45" width="142.2" height="0.9" fill="#d6daf4"/><rect x="632.6" y="292.45" width="142.2" height="0.9" fill="#d6daf4"/><rect x="779.3" y="292.45" width="142.2" height="0.9" fill="#d6daf4"/><rect x="926" y="292.45" width="142.2" height="0.9" fill="#d6daf4"/></svg>
</div>
</body>
</html>
